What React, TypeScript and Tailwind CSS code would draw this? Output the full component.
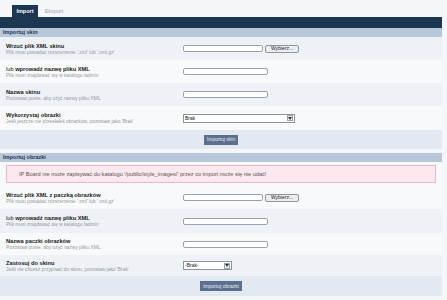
import React from 'react';

type Row = {
    label: React.ReactNode;
    hint: string;
    field: React.ReactNode;
};

const TextInput = ({ w = 'w-[85px]' }: { w?: string }) => (
    <div className={`${w} h-[7px] bg-white border border-[#9aa3ad] rounded-[2px]`} />
);

const FileInput = () => (
    <div className="flex items-center gap-[2px]">
        <div className="w-[80px] h-[7px] bg-white border border-[#9aa3ad] rounded-[2px]" />
        <div className="w-[34px] h-[8px] bg-[#eceef0] border border-[#8d949c] rounded-[2px] flex items-center justify-center text-[5px] leading-none text-[#222]">
            Wybierz...
        </div>
    </div>
);

const Select = ({ value, w }: { value: string; w: string }) => (
    <div className={`${w} h-[9px] bg-white border border-[#8d949c] flex items-center justify-between pl-[1px] pr-[1px]`}>
        <span className="text-[5px] leading-none text-[#111]">{value}</span>
        <span className="w-[6px] h-[6px] border border-[#9aa3ad] bg-[#eef0f3] flex items-center justify-center">
            <svg width="4" height="3" viewBox="0 0 4 3">
                <path d="M0 0 L4 0 L2 3 Z" fill="#333" />
            </svg>
        </span>
    </div>
);

const Bold = ({ children }: { children: React.ReactNode }) => <b className="font-bold">{children}</b>;

const FormRow = ({ row, odd, h }: { row: Row; odd: boolean; h: string }) => (
    <div className={`${h} flex items-center ${odd ? 'bg-[#eef1f5]' : 'bg-[#f8f9fb]'}`}>
        <div className="w-[183px] pl-[6px] flex flex-col gap-[1px]">
            <div className="text-[5.7px] leading-[6px] text-[#1a1a1a]">{row.label}</div>
            <div className="text-[4.9px] leading-[5px] text-[#959aa1]">{row.hint}</div>
        </div>
        <div>{row.field}</div>
    </div>
);

const SubmitBar = ({ label, h }: { label: string; h: string }) => (
    <div className={`${h} bg-[#e3e9f1] flex items-center justify-center`}>
        <div className="h-[10px] px-[3px] bg-[#5b6f8f] text-[#e6ecf4] text-[5px] leading-none flex items-center">
            {label}
        </div>
    </div>
);

const Header = ({ title }: { title: string }) => (
    <div className="h-[9px] bg-[#b8c7da] flex items-center pl-[3px] text-[5.5px] font-bold text-[#1d3652] leading-none">
        {title}
    </div>
);

export default function App() {
    const skinRows: Row[] = [
        {
            label: <Bold>Wrzuć plik XML skinu</Bold>,
            hint: "Plik musi posiadać rozszerzenie '.xml' lub '.xml.gz'",
            field: <FileInput />,
        },
        {
            label: (
                <>
                    lub <Bold>wprowadź nazwę pliku XML</Bold>
                </>
            ),
            hint: 'Plik musi znajdować się w katalogu /admin',
            field: <TextInput />,
        },
        {
            label: <Bold>Nazwa skinu</Bold>,
            hint: 'Pozostaw puste, aby użyć nazwy pliku XML',
            field: <TextInput />,
        },
        {
            label: <Bold>Wykorzystaj obrazki</Bold>,
            hint: "Jeśli jeszcze nie przesłałeś obrazków, pozostaw jako 'Brak'",
            field: <Select value="Brak" w="w-[112px]" />,
        },
    ];

    const imageRows: Row[] = [
        {
            label: <Bold>Wrzuć plik XML z paczką obrazków</Bold>,
            hint: "Plik musi posiadać rozszerzenie '.xml' lub '.xml.gz'",
            field: <FileInput />,
        },
        {
            label: (
                <>
                    lub <Bold>wprowadź nazwę pliku XML</Bold>
                </>
            ),
            hint: 'Plik musi znajdować się w katalogu /admin',
            field: <TextInput />,
        },
        {
            label: <Bold>Nazwa paczki obrazków</Bold>,
            hint: 'Pozostaw puste, aby użyć nazwy pliku XML',
            field: <TextInput />,
        },
        {
            label: <Bold>Zastosuj do skinu</Bold>,
            hint: "Jeśli nie chcesz przypisać do skinu, pozostaw jako 'Brak'",
            field: <Select value="-Brak-" w="w-[49px]" />,
        },
    ];

    const imageHeights = ['h-[23px]', 'h-[24px]', 'h-[22px]', 'h-[21px]'];

    return (
        <div
            className="w-[447px] h-[300px] overflow-hidden bg-[#f4f6f9]"
            style={{ fontFamily: '"Liberation Sans", Arial, sans-serif' }}
        >
            <div className="w-[442px]">
                {/* zakładki */}
                <div className="h-[17px] flex items-end pl-[12px] gap-[4px]">
                    <div className="h-[12px] w-[26px] bg-[#1d3652] text-white text-[5.5px] font-bold flex items-center justify-center">
                        Import
                    </div>
                    <div className="h-[12px] w-[24px] text-[#9aa3ad] text-[5.5px] flex items-center justify-center">
                        Eksport
                    </div>
                </div>
                <div className="h-[11px] bg-[#1d3652]" />

                <Header title="Importuj skin" />
                {skinRows.map((r, i) => (
                    <FormRow key={i} row={r} odd={i % 2 === 0} h={i === 3 ? 'h-[24px]' : 'h-[23px]'} />
                ))}
                <SubmitBar label="Importuj skin" h="h-[19px]" />

                <div className="h-[4px]" />
                <Header title="Importuj obrazki" />
                <div className="pt-[3px] pb-[3px] px-[6px] bg-[#f8f9fb]">
                    <div className="h-[18px] bg-[#fce8ee] border border-[#e9b9c8] flex items-center pl-[12px] text-[5.6px] text-[#555]">
                        IP Board nie może zapisywać do katalogu '/public/style_images/' przez co import może się nie udać!
                    </div>
                </div>
                {imageRows.map((r, i) => (
                    <FormRow key={i} row={r} odd={i % 2 === 1} h={imageHeights[i]} />
                ))}
                <SubmitBar label="Importuj obrazki" h="h-[20px]" />
            </div>
        </div>
    );
}
